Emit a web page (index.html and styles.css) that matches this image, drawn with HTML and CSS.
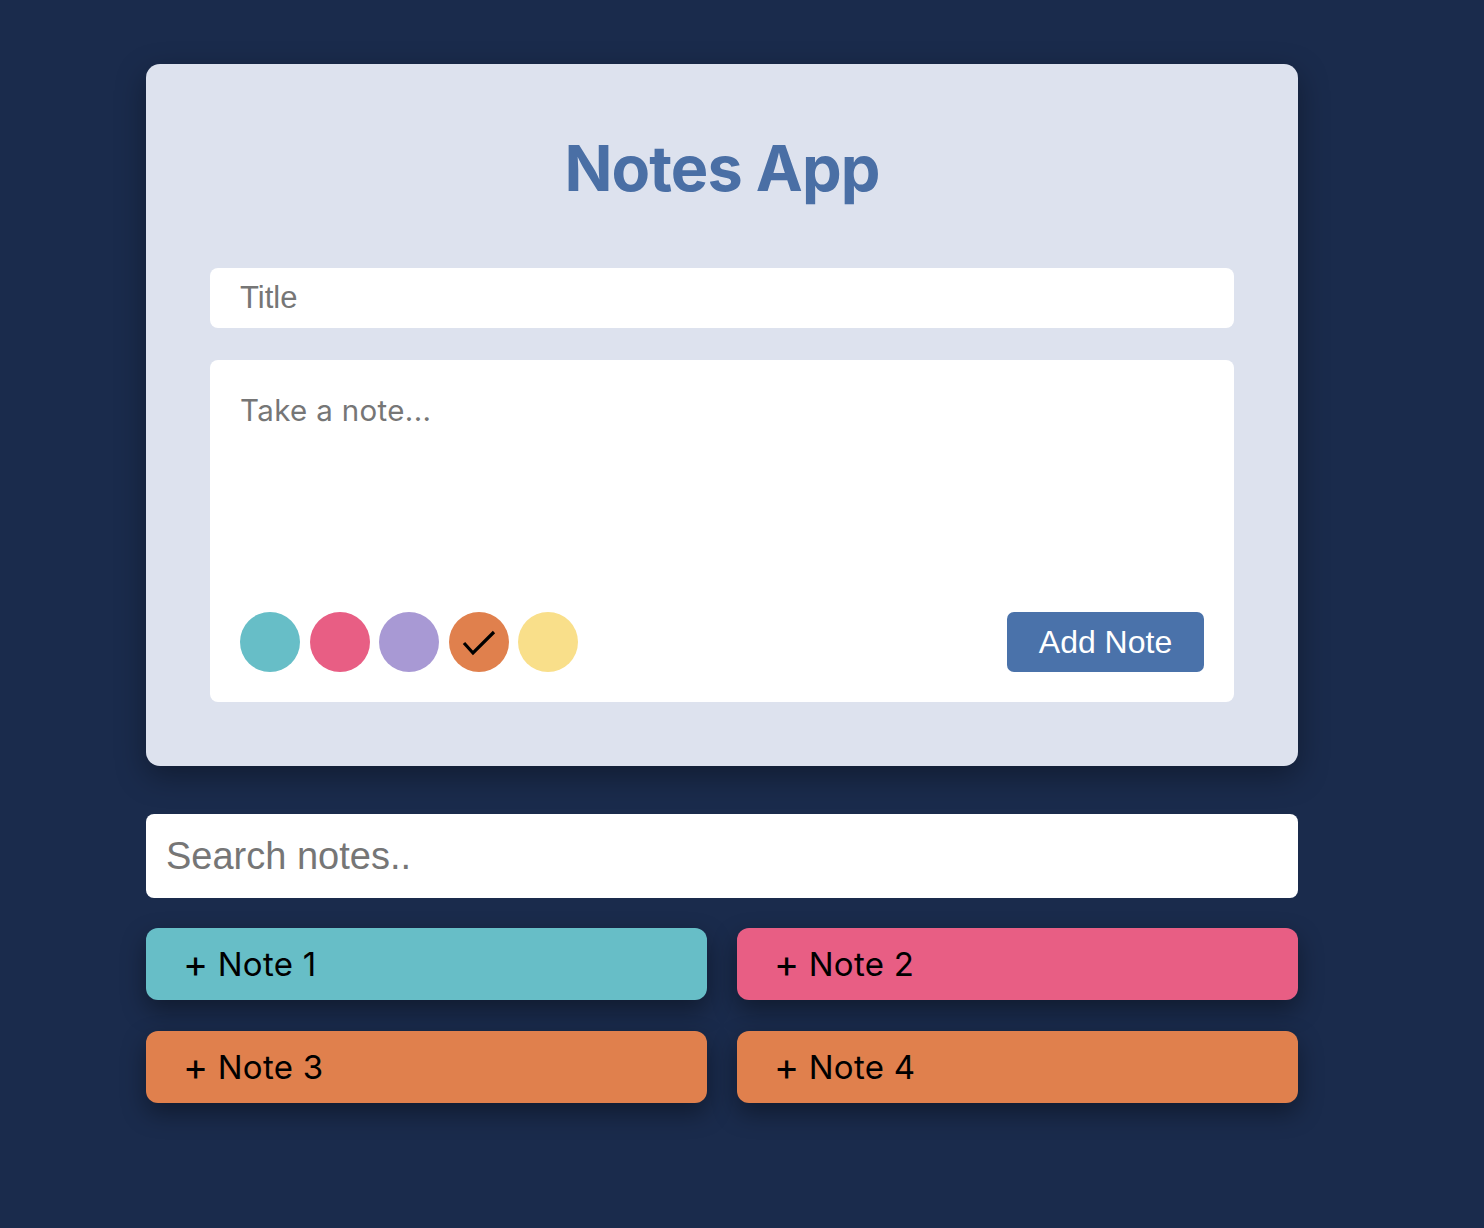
FILE: index.html
```html
<!DOCTYPE html>
<html lang="en">
<head>
<meta charset="utf-8">
<title>Notes App</title>
<link rel="stylesheet" href="styles.css">
</head>
<body>
<main class="app">
  <section class="editor">
    <h1 class="app-title">Notes App</h1>
    <input class="title-input" type="text" placeholder="Title">
    <div class="note-box">
      <textarea class="note-text" placeholder="Take a note..."></textarea>
      <div class="note-actions">
        <div class="swatches">
          <span class="swatch teal"></span>
          <span class="swatch pink"></span>
          <span class="swatch lavender"></span>
          <span class="swatch orange selected">
            <svg viewBox="0 0 60 60" width="60" height="60"><polyline points="15,31 24,41 45,20" fill="none" stroke="#000" stroke-width="3.2"/></svg>
          </span>
          <span class="swatch yellow"></span>
        </div>
        <button class="add-btn">Add Note</button>
      </div>
    </div>
  </section>
  <input class="search" type="text" placeholder="Search notes..">
  <div class="notes">
    <div class="note teal"><span class="plus">+</span> Note 1</div>
    <div class="note pink"><span class="plus">+</span> Note 2</div>
    <div class="note orange"><span class="plus">+</span> Note 3</div>
    <div class="note orange"><span class="plus">+</span> Note 4</div>
  </div>
</main>
</body>
</html>
```
FILE: styles.css
```css
html, body {
  margin: 0;
  padding: 0;
}
body {
  background: #1a2b4c;
  font-family: Inter, "Liberation Sans", sans-serif;
  min-height: 1228px;
}
.app {
  width: 1152px;
  margin-left: 146px;
  padding-top: 64px;
}
.editor {
  background: #dde2ee;
  border-radius: 14px;
  padding: 64px;
  display: flex;
  flex-direction: column;
  box-shadow: 0 10px 30px rgba(0, 0, 0, 0.35);
}
.app-title {
  margin: 0 0 63px;
  padding-top: 3px;
  font-family: Inter, sans-serif;
  font-weight: 700;
  font-size: 63px;
  letter-spacing: -0.9px;
  line-height: 74px;
  text-align: center;
  color: #4a6fa5;
}
.title-input {
  height: 60px;
  box-sizing: border-box;
  border: none;
  border-radius: 8px;
  background: #fff;
  padding: 0 30px;
  font-family: "Liberation Sans", Arial, sans-serif;
  font-size: 31px;
  color: #222;
  outline: none;
}
.title-input::placeholder,
.search::placeholder,
.note-text::placeholder {
  color: #767676;
}
.note-box {
  margin-top: 32px;
  background: #fff;
  border-radius: 8px;
  padding: 30px;
  display: flex;
  flex-direction: column;
}
.note-text {
  height: 222px;
  border: none;
  outline: none;
  resize: none;
  padding: 0;
  margin: 0;
  font-family: Inter, sans-serif;
  font-size: 29.5px;
  letter-spacing: 0.35px;
  line-height: 40px;
  color: #222;
}
.note-actions {
  display: flex;
  justify-content: space-between;
  align-items: center;
  height: 60px;
}
.swatches {
  display: flex;
  gap: 9.5px;
}
.swatch {
  width: 60px;
  height: 60px;
  border-radius: 50%;
  display: block;
}
.swatch svg {
  display: block;
}
.teal { background: #67bec7; }
.pink { background: #e85e84; }
.lavender { background: #a899d4; }
.orange { background: #e0804d; }
.yellow { background: #f9df8a; }
.add-btn {
  width: 197px;
  height: 60px;
  border: none;
  border-radius: 7px;
  background: #4a72aa;
  color: #fff;
  font-family: "Liberation Sans", Arial, sans-serif;
  font-size: 32px;
  padding: 0;
}
.search {
  display: block;
  width: 100%;
  box-sizing: border-box;
  margin-top: 48px;
  height: 84px;
  border: none;
  border-radius: 8px;
  background: #fff;
  padding: 0 20px;
  font-family: "Liberation Sans", Arial, sans-serif;
  font-size: 38px;
  outline: none;
}
.notes {
  margin-top: 30px;
  display: grid;
  grid-template-columns: 1fr 1fr;
  column-gap: 30px;
  row-gap: 31px;
}
.note {
  height: 72px;
  border-radius: 12px;
  padding-left: 37px;
  display: flex;
  align-items: center;
  gap: 0.28em;
  font-family: Inter, sans-serif;
  font-size: 33px;
  letter-spacing: 0.3px;
  color: #000;
  box-shadow: 0 10px 24px rgba(0, 0, 0, 0.38);
}
.plus {
  font-size: 38px;
  margin-top: -3px;
}
```
